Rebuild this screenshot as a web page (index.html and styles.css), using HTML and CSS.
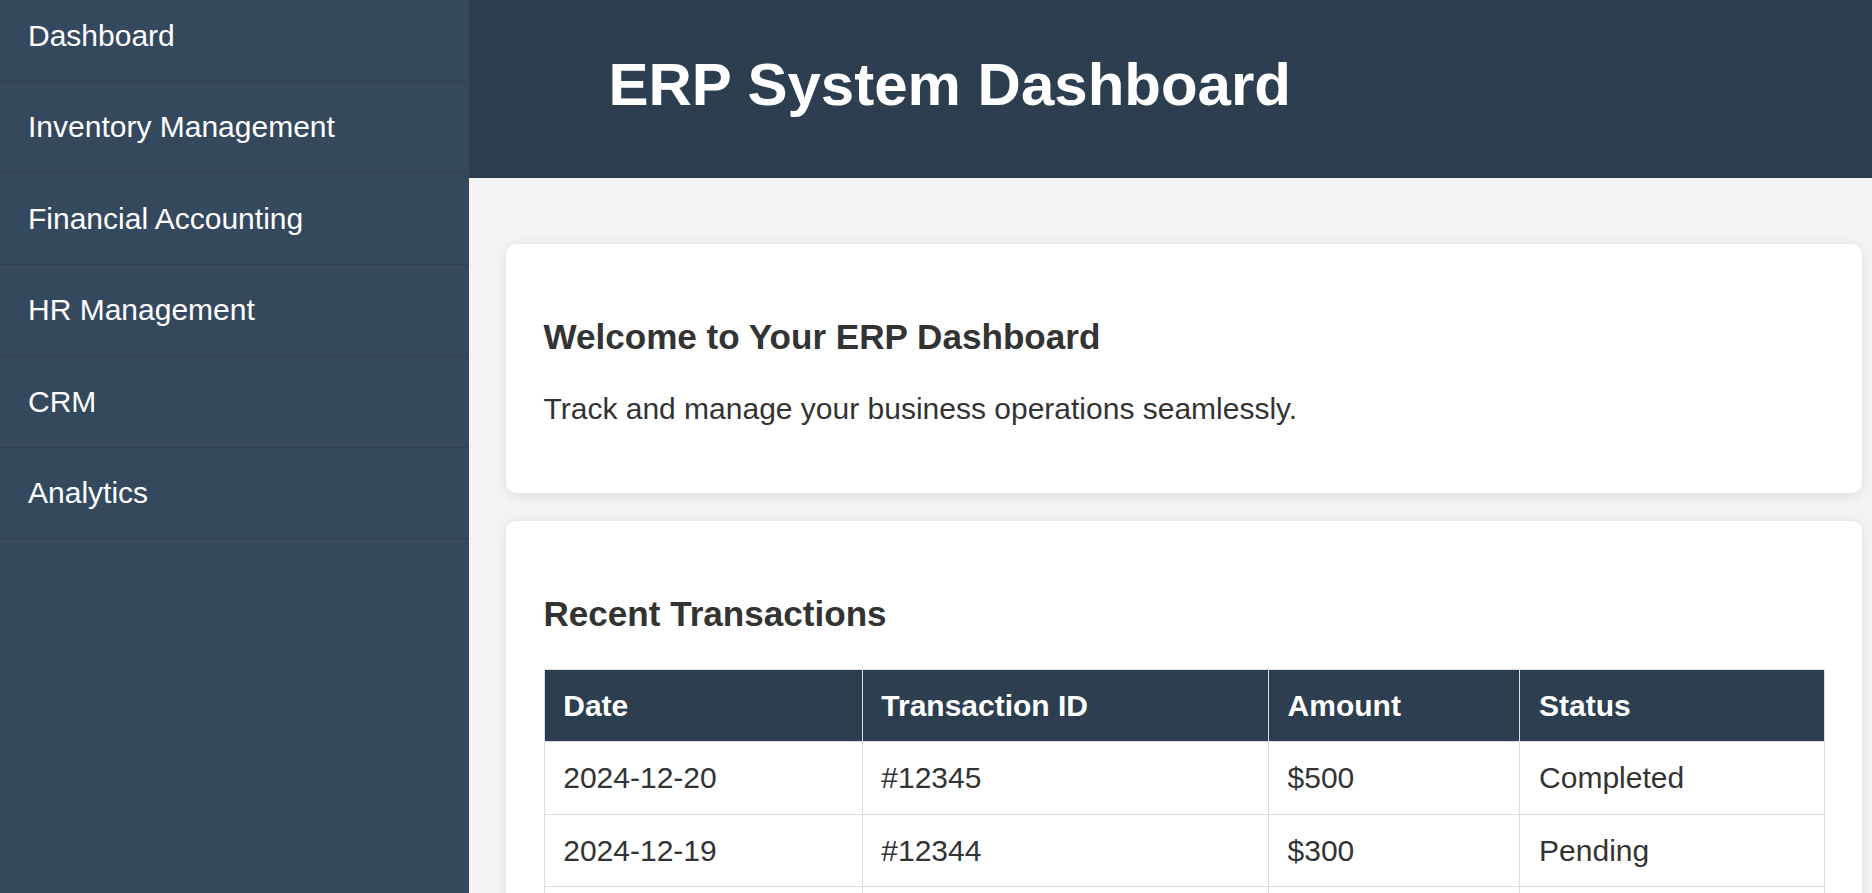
FILE: index.html
```html
<!DOCTYPE html>
<html lang="en">
<head>
<meta charset="utf-8">
<title>ERP System Dashboard</title>
<link rel="stylesheet" href="styles.css">
</head>
<body>
<div class="app">
  <nav class="sidebar">
    <a class="nav-item" href="#">Dashboard</a>
    <a class="nav-item" href="#">Inventory Management</a>
    <a class="nav-item" href="#">Financial Accounting</a>
    <a class="nav-item" href="#">HR Management</a>
    <a class="nav-item" href="#">CRM</a>
    <a class="nav-item" href="#">Analytics</a>
  </nav>
  <div class="main">
    <header class="topbar">
      <h1 class="title">ERP System Dashboard</h1>
    </header>
    <div class="content">
      <section class="card">
        <h3 class="card-title">Welcome to Your ERP Dashboard</h3>
        <p class="card-text">Track and manage your business operations seamlessly.</p>
      </section>
      <section class="card">
        <h3 class="card-title">Recent Transactions</h3>
        <table class="tx-table">
          <thead>
            <tr><th>Date</th><th>Transaction ID</th><th>Amount</th><th>Status</th></tr>
          </thead>
          <tbody>
            <tr><td>2024-12-20</td><td>#12345</td><td>$500</td><td>Completed</td></tr>
            <tr><td>2024-12-19</td><td>#12344</td><td>$300</td><td>Pending</td></tr>
            <tr><td>2024-12-18</td><td>#12343</td><td>$450</td><td>Completed</td></tr>
            <tr><td>2024-12-17</td><td>#12342</td><td>$200</td><td>Failed</td></tr>
          </tbody>
        </table>
      </section>
    </div>
  </div>
</div>
</body>
</html>
```

FILE: styles.css
```css
* {
  box-sizing: border-box;
}

html, body {
  margin: 0;
  padding: 0;
  height: 100%;
  overflow: hidden;
}

body {
  font-family: "Liberation Sans", Arial, sans-serif;
  font-size: 30px;
  color: #333;
  background: #f4f4f4;
}

.app {
  display: flex;
  height: 100vh;
  overflow: hidden;
}

.sidebar {
  width: 469px;
  flex: none;
  background: #34495e;
  display: flex;
  flex-direction: column;
}

.nav-item {
  display: block;
  color: #fff;
  text-decoration: none;
  font-size: 30px;
  line-height: 35px;
  padding: 27.75px 20px 27.75px 28px;
  border-bottom: 1px solid #2c3e50;
}

.nav-item:first-child {
  padding-top: 17.75px;
}

.main {
  flex: 1;
  min-width: 0;
  display: flex;
  flex-direction: column;
}

.topbar {
  background: #2c3e50;
  color: #fff;
  padding: 10px 20px 19px 139.5px;
}

.title {
  margin: 40px 0;
  font-size: 60px;
  font-weight: bold;
}

.content {
  padding: 66px 10px 0 37px;
  display: flex;
  flex-direction: column;
  gap: 28px;
}

.card {
  background: #fff;
  border-radius: 10px;
  padding: 37.5px;
  box-shadow: 0 2.5px 12.5px rgba(0, 0, 0, 0.1);
}

.card-title {
  font-size: 35.1px;
  font-weight: bold;
  margin: 35.1px 0;
  color: #333;
}

.card-text {
  margin: 30px 0;
}

.tx-table {
  width: 100%;
  border-collapse: collapse;
}

.tx-table th,
.tx-table td {
  border: 1px solid #ddd;
  padding: 18.75px;
  text-align: left;
}

.tx-table th {
  background: #2c3e50;
  color: #fff;
  font-weight: bold;
}
```
